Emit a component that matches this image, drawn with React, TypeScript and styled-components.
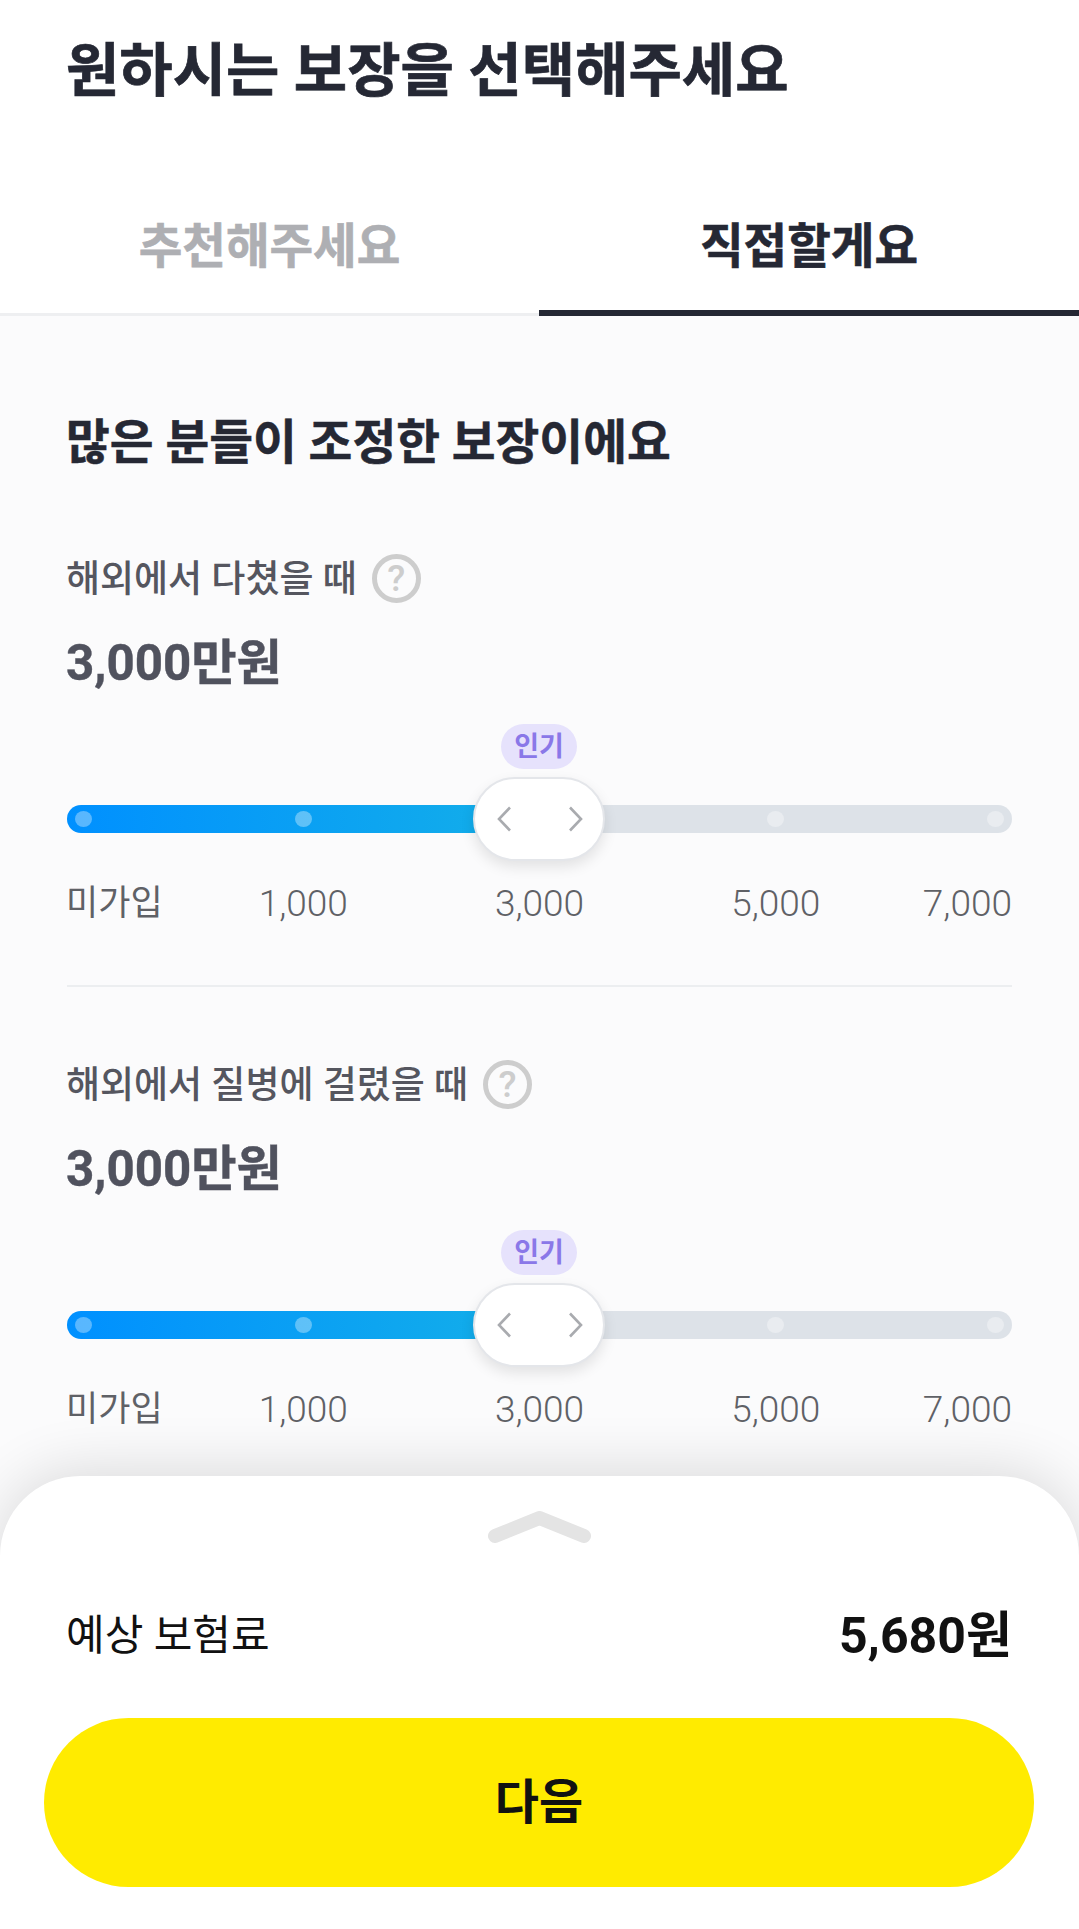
import React from "react";
import styled, { createGlobalStyle } from "styled-components";

const Global = createGlobalStyle`
  html, body { margin: 0; padding: 0; background: #fff; }
  * { box-sizing: border-box; }
  body { font-family: Roboto, "Noto Sans CJK KR", sans-serif; }
`;

const Page = styled.div`
  position: relative;
  width: 1079px;
  height: 1929px;
  overflow: hidden;
  background: #fff;
`;

const Title = styled.h1`
  margin: 31px 67px 0 66px;
  font-size: 58px;
  line-height: 80px;
  font-weight: 700;
  color: #252834;
  white-space: nowrap;
  -webkit-text-stroke: 0.7px currentColor;
`;

const Tabs = styled.div`
  display: grid;
  grid-template-columns: 539px 540px;
  margin-top: 63px;
`;

const Tab = styled.div<{ $active?: boolean }>`
  padding: 33px 0 29px;
  text-align: center;
  font-size: 47.4px;
  line-height: 80px;
  font-weight: 700;
  color: ${(p) => (p.$active ? "#252834" : "#aeafb3")};
  box-shadow: inset 0 ${(p) => (p.$active ? "-6px 0 #252834" : "-3px 0 #eeeff1")};
  -webkit-text-stroke: 0.6px currentColor;
`;

const Content = styled.div`
  height: 1613px;
  padding: 97px 67px 0;
  background: #fbfbfc;
`;

const Heading = styled.h2`
  margin: 0 0 80px -1px;
  font-size: 47.6px;
  line-height: 60px;
  font-weight: 700;
  color: #252834;
  -webkit-text-stroke: 0.5px currentColor;
`;

const Coverage = styled.section`
  & + & {
    margin-top: 72px;
  }
  &:not(:last-child) {
    padding-bottom: 61px;
    border-bottom: 2px solid #eceef0;
  }
`;

const LabelRow = styled.div`
  display: flex;
  align-items: center;
  gap: 15px;
  height: 50px;
  margin-left: -1px;
`;

const Label = styled.span`
  margin-top: 4px;
  font-size: 37px;
  line-height: 50px;
  font-weight: 500;
  color: #55565f;
`;

const Help = styled.span`
  display: flex;
  align-items: center;
  justify-content: center;
  width: 49px;
  height: 49px;
  border: 5px solid #cdcdcd;
  border-radius: 50%;
  font-size: 37px;
  line-height: 37px;
  font-weight: 500;
  color: #cdcdcd;
`;

const Value = styled.div`
  margin: 30px 0 0 -1px;
  font-size: 49.3px;
  line-height: 60px;
  font-weight: 700;
  color: #50525e;
  -webkit-text-stroke: 0.4px currentColor;
`;

const Chip = styled.div`
  width: 76px;
  height: 45px;
  margin: 31px 0 0 434px;
  padding-top: 1px;
  border-radius: 23px;
  background: #e6e2fc;
  color: #8a78e8;
  font-size: 27px;
  line-height: 45px;
  font-weight: 700;
  text-align: center;
`;

const stops = `
  display: grid;
  grid-template-columns: 118fr 236fr 236fr 236fr 118fr;
  align-items: center;
`;

const Track = styled.div`
  ${stops}
  position: relative;
  height: 28px;
  margin-top: 36px;
  border-radius: 14px;
  background: linear-gradient(90deg, #0090ff 0%, #14b0e8 50%, #dde2e8 50%);
`;

const Dot = styled.span<{ $align: string }>`
  justify-self: ${(p) => p.$align};
  width: 17px;
  height: 16px;
  margin: 0 8px;
  border-radius: 50%;
  background: rgba(255, 255, 255, 0.35);
`;

const Thumb = styled.div`
  position: absolute;
  left: 406px;
  top: -28px;
  display: flex;
  align-items: center;
  justify-content: space-between;
  width: 132px;
  height: 84px;
  padding: 0 20px 0 22px;
  border: 2px solid #e4e6ea;
  border-radius: 42px;
  background: #fff;
  box-shadow: 0 6px 14px rgba(0, 0, 0, 0.1);
`;

const Chevron = styled.svg`
  display: block;
  width: 14px;
  height: 26px;
  fill: none;
  stroke: #a9abaf;
  stroke-width: 2.6;
`;

const Ticks = styled.div`
  ${stops}
  margin-top: 51px;
`;

const Tick = styled.span<{ $align: string; $word?: boolean }>`
  justify-self: ${(p) => p.$align};
  font-size: ${(p) => (p.$word ? "35px" : "37px")};
  line-height: 40px;
  font-weight: ${(p) => (p.$word ? 400 : 300)};
  color: #5f6166;
  white-space: nowrap;
  margin-left: ${(p) => (p.$word ? "-1px" : "0")};
`;

const Sheet = styled.div`
  position: absolute;
  left: 0;
  right: 0;
  bottom: 0;
  height: 453px;
  display: flex;
  flex-direction: column;
  border-radius: 80px 80px 0 0;
  background: #fff;
  box-shadow: 0 -4px 60px rgba(0, 0, 0, 0.14);
`;

const Handle = styled.svg`
  display: block;
  width: 103px;
  height: 32px;
  margin: 35px auto 0;
  fill: none;
  stroke: #e4e4e4;
  stroke-width: 14;
  stroke-linecap: round;
  stroke-linejoin: round;
`;

const PriceRow = styled.div`
  display: flex;
  align-items: center;
  justify-content: space-between;
  margin-top: 53px;
  padding: 0 67px 0 66px;
  height: 70px;
`;

const PriceLabel = styled.span`
  font-size: 42px;
  font-weight: 400;
  color: #111;
`;

const Price = styled.span`
  font-size: 50px;
  font-weight: 700;
  color: #111;
`;

const NextButton = styled.button`
  display: block;
  height: 169px;
  margin: 52px 45px 0 44px;
  padding: 0 0 9px;
  border: 0;
  border-radius: 85px;
  background: #ffeb00;
  color: #111;
  font-family: inherit;
  font-size: 48px;
  font-weight: 700;
`;

const ticks = ["미가입", "1,000", "3,000", "5,000", "7,000"];
const aligns = ["start", "center", "center", "center", "end"];

function Slider() {
  return (
    <>
      <Chip>인기</Chip>
      <Track>
        {aligns.map((a, i) => (
          <Dot key={i} $align={a} />
        ))}
        <Thumb>
          <Chevron viewBox="0 0 14 26">
            <path d="M13 1.5 2 13l11 11.5" />
          </Chevron>
          <Chevron viewBox="0 0 14 26">
            <path d="M1 1.5 12 13 1 24.5" />
          </Chevron>
        </Thumb>
      </Track>
      <Ticks>
        {ticks.map((t, i) => (
          <Tick key={t} $align={aligns[i]} $word={i === 0}>
            {t}
          </Tick>
        ))}
      </Ticks>
    </>
  );
}

function CoverageItem({ label }: { label: string }) {
  return (
    <Coverage>
      <LabelRow>
        <Label>{label}</Label>
        <Help>?</Help>
      </LabelRow>
      <Value>3,000만원</Value>
      <Slider />
    </Coverage>
  );
}

export default function App() {
  return (
    <Page>
      <Global />
      <Title>원하시는 보장을 선택해주세요</Title>
      <Tabs>
        <Tab>추천해주세요</Tab>
        <Tab $active>직접할게요</Tab>
      </Tabs>
      <Content>
        <Heading>많은 분들이 조정한 보장이에요</Heading>
        <CoverageItem label="해외에서 다쳤을 때" />
        <CoverageItem label="해외에서 질병에 걸렸을 때" />
      </Content>
      <Sheet>
        <Handle viewBox="0 0 103 32">
          <polyline points="7,25 51.5,7 96,25" />
        </Handle>
        <PriceRow>
          <PriceLabel>예상 보험료</PriceLabel>
          <Price>5,680원</Price>
        </PriceRow>
        <NextButton>다음</NextButton>
      </Sheet>
    </Page>
  );
}
